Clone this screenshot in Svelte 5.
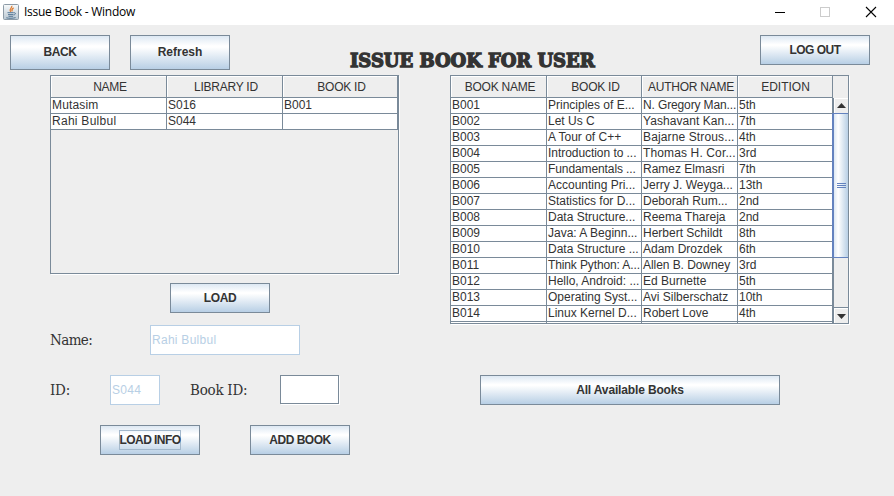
<script>
  const issued = [
    ['Mutasim', 'S016', 'B001'],
    ['Rahi Bulbul', 'S044', ''],
  ];
  const books = [
    ['B001', 'Principles of E...', 'N. Gregory Man...', '5th'],
    ['B002', 'Let Us C', 'Yashavant Kan...', '7th'],
    ['B003', 'A Tour of C++', 'Bajarne Strous...', '4th'],
    ['B004', 'Introduction to ...', 'Thomas H. Cor...', '3rd'],
    ['B005', 'Fundamentals ...', 'Ramez Elmasri', '7th'],
    ['B006', 'Accounting Pri...', 'Jerry J. Weyga...', '13th'],
    ['B007', 'Statistics for D...', 'Deborah Rum...', '2nd'],
    ['B008', 'Data Structure...', 'Reema Thareja', '2nd'],
    ['B009', 'Java: A Beginn...', 'Herbert Schildt', '8th'],
    ['B010', 'Data Structure ...', 'Adam Drozdek', '6th'],
    ['B011', 'Think Python: A...', 'Allen B. Downey', '3rd'],
    ['B012', 'Hello, Android: ...', 'Ed Burnette', '5th'],
    ['B013', 'Operating Syst...', 'Avi Silberschatz', '10th'],
    ['B014', 'Linux Kernel D...', 'Robert Love', '4th'],
    ['', '', '', ''],
  ];
  const tracking = {
    'Rahi Bulbul': 0.27,
    'Mutasim': 0.15,
    'N. Gregory Man...': -0.13,
    'Think Python: A...': -0.12,
    'Fundamentals ...': -0.1,
    'Introduction to ...': -0.05,
    'Thomas H. Cor...': 0.13,
    'Bajarne Strous...': 0.13,
    'Yashavant Kan...': 0.05,
    'Allen B. Downey': -0.06,
  };
</script>

<div class="window">
  <header class="titlebar">
    <svg class="java" width="16" height="16" viewBox="0 0 16 16">
      <defs>
        <linearGradient id="tile" x1="0" y1="0" x2="0" y2="1">
          <stop offset="0" stop-color="#f8fafb" />
          <stop offset="1" stop-color="#b9c7d2" />
        </linearGradient>
      </defs>
      <rect x=".5" y=".5" width="15" height="15" rx="1" fill="url(#tile)" stroke="#8d9ba7" />
      <path d="M8.8 1.8C9.6 4 5.4 4.6 7.6 7.8M10.6 3.9C8.6 5 8.4 5.8 9.2 7.6" fill="none" stroke="#e07a2c" stroke-width="1.2" />
      <path d="M4.5 8.7h6.3M11 8.8c2-.4 2 1.8-.4 2.2M5 10.6h5.4M5.5 12.3h4.6M3.3 13.8c2.5.7 7 .6 9.3-.2" fill="none" stroke="#486d8d" stroke-width=".9" />
    </svg>
    <span class="caption">Issue Book - Window</span>
    <svg class="controls" width="120" height="25" viewBox="0 0 120 25">
      <path d="M1 12.5h10" stroke="#000" />
      <rect x="46.5" y="7.5" width="9" height="9" fill="none" stroke="#ccc" />
      <path d="M92 7l10 10M102 7l-10 10" stroke="#000" stroke-width="1.1" />
    </svg>
  </header>

  <div class="toolbar">
    <button class="tall snug">BACK</button>
    <button class="tall refresh">Refresh</button>
    <h1>ISSUE BOOK FOR USER</h1>
    <button class="logout tight">LOG OUT</button>
  </div>

  <main>
    <section class="left">
      <div class="pane issued">
        <div class="row head">
          <span>NAME</span><span>LIBRARY ID</span><span>BOOK ID</span>
        </div>
        {#each issued as row}
          <div class="row">{#each row as cell}<span style:letter-spacing="{tracking[cell] ?? 0}px">{cell}</span>{/each}</div>
        {/each}
      </div>
      <button class="load snug">LOAD</button>
      <div class="field name">
        <label for="name">Name:</label>
        <div class="input off" id="name">Rahi Bulbul</div>
      </div>
      <div class="field ids">
        <label for="id">ID:</label>
        <div class="input off" id="id">S044</div>
        <label for="book">Book ID:</label>
        <div class="input" id="book"></div>
      </div>
      <div class="actions">
        <button class="tight"><span class="focus">LOAD INFO</span></button>
        <button class="tight">ADD BOOK</button>
      </div>
    </section>

    <section class="right">
      <div class="pane books">
        <div class="row head">
          <span>BOOK NAME</span><span>BOOK ID</span><span>AUTHOR NAME</span><span class="wide">EDITION</span>
        </div>
        <div class="body">
          <div class="rows">
            {#each books as row}
              <div class="row">{#each row as cell}<span style:letter-spacing="{tracking[cell] ?? 0}px">{cell}</span>{/each}</div>
            {/each}
          </div>
          <div class="scroll">
            <div class="arrow"><svg width="9" height="5"><path d="M0 5L4.5 0L9 5Z" fill="#333" /></svg></div>
            <div class="thumb"><i></i><i></i><i></i></div>
            <div class="track"></div>
            <div class="arrow down"><svg width="9" height="5"><path d="M0 0L4.5 5L9 0Z" fill="#333" /></svg></div>
          </div>
        </div>
      </div>
      <button class="all">All Available Books</button>
    </section>
  </main>
</div>

<style>
  :global(body) { margin: 0; }
  * { box-sizing: border-box; }
  .window {
    width: 894px; height: 496px; overflow: hidden; background: #eee; color: #333;
    font: 12px/15px "Liberation Sans", Arial, sans-serif;
  }
  .titlebar { display: flex; height: 25px; background: #fff; align-items: flex-start; }
  .java { margin: 4px 0 0 3px; }
  .caption { margin: 4px 0 0 5px; font: 12px/16px "Open Sans", sans-serif; letter-spacing: -.26px; color: #000; white-space: nowrap; }
  .controls { margin-left: auto; margin-right: 0; }
  button {
    display: flex; align-items: center; justify-content: center;
    width: 100px; height: 30px; padding: 0; border: 1px solid #7a8a99; border-radius: 0;
    background: linear-gradient(#dde8f3 0, #fff 30%, #fff 34%, #b8cfe5 100%);
    color: #333; font: bold 12px/15px "Liberation Sans", Arial, sans-serif; white-space: nowrap;
  }
  .snug { letter-spacing: -.4px; }
  .tight { letter-spacing: -.5px; }
  .toolbar { display: flex; height: 50px; padding: 10px 24px 0 10px; align-items: flex-start; }
  .tall { height: 35px; }
  .refresh { margin-left: 20px; }
  h1 {
    width: 250px; margin: 12px 0 0 120px; white-space: nowrap;
    font: bold 18px/28px "DejaVu Serif", serif; -webkit-text-stroke: 1.3px #333; letter-spacing: -.05px;
  }
  .logout { width: 110px; margin-left: auto; }
  main { display: flex; padding-left: 50px; }
  .left { width: 349px; }
  .right { width: 399px; margin-left: 51px; }
  .pane { border: 1px solid #7a8a99; box-shadow: 1px 1px #fff; overflow: hidden; }
  .row { display: grid; height: 16px; }
  .row span {
    padding-left: 1px; overflow: hidden; white-space: nowrap; background: #fff;
    border-right: 1px solid #7a8a99; border-bottom: 1px solid #7a8a99;
  }
  .head { height: 22px; }
  .row.head span {
    padding: 4px 0 0 3px; text-align: center; background: #eee; line-height: 15px;
    box-shadow: inset 1px 1px #fff; letter-spacing: -.25px;
  }
  .row.head .wide { padding-left: 1px; letter-spacing: 0; }
  .issued { height: 199px; }
  .issued .row { grid-template-columns: 116px 116px 115px; }
  .books { height: 249px; }
  .books .row { grid-template-columns: 96px 95px 96px 95px; }
  .body { display: flex; height: 225px; }
  .rows { width: 382px; height: 225px; overflow: hidden; }
  .scroll { display: flex; flex-direction: column; width: 15px; height: 225px; background: #eee; border-left: 1px solid #7a8a99; }
  .arrow { display: flex; height: 15px; align-items: center; justify-content: center; box-shadow: inset 1px 1px #fff; }
  .down { height: 16px; border-top: 1px solid #7a8a99; padding-top: 1px; }
  .thumb {
    display: flex; flex-direction: column; gap: 1px; justify-content: center; align-items: center;
    width: 16px; height: 145px; margin-left: -2px; border: 1px solid #6382bf; border-left-width: 2px; border-right: 0;
    background: linear-gradient(90deg, #dde8f3, #fff 30%, #b8cfe5); flex: none;
  }
  .thumb i { width: 9px; height: 1px; background: #6382bf; }
  .track { flex: 1; }
  .load { margin: 9px 0 0 120px; }
  .field { display: flex; height: 30px; align-items: flex-start; }
  .name { margin-top: 12px; }
  .ids { margin-top: 20px; }
  label { font: 15px/20px "DejaVu Serif Condensed", "DejaVu Serif", serif; letter-spacing: -.6px; white-space: nowrap; width: 100px; padding-top: 5px; }
  .ids label { width: 60px; letter-spacing: -.25px; }
  .ids label:nth-of-type(2) { width: 90px; margin-left: 30px; }
  .input { width: 59px; height: 29px; padding: 7px 1px; background: #fff; border: 1px solid #7a8a99; box-shadow: 1px 1px #fff; }
  .off { width: 50px; height: 30px; border-color: #b8cfe5; box-shadow: none; color: #b8cfe5; letter-spacing: .27px; }
  #name { width: 150px; }
  .actions { display: flex; gap: 50px; margin: 20px 0 0 50px; }
  .focus { height: 20px; padding: 2px 0; border: 1px solid #a3b8cc; letter-spacing: -.58px; }
  .all { width: 300px; margin: 51px 0 0 30px; letter-spacing: -.15px; }
</style>
